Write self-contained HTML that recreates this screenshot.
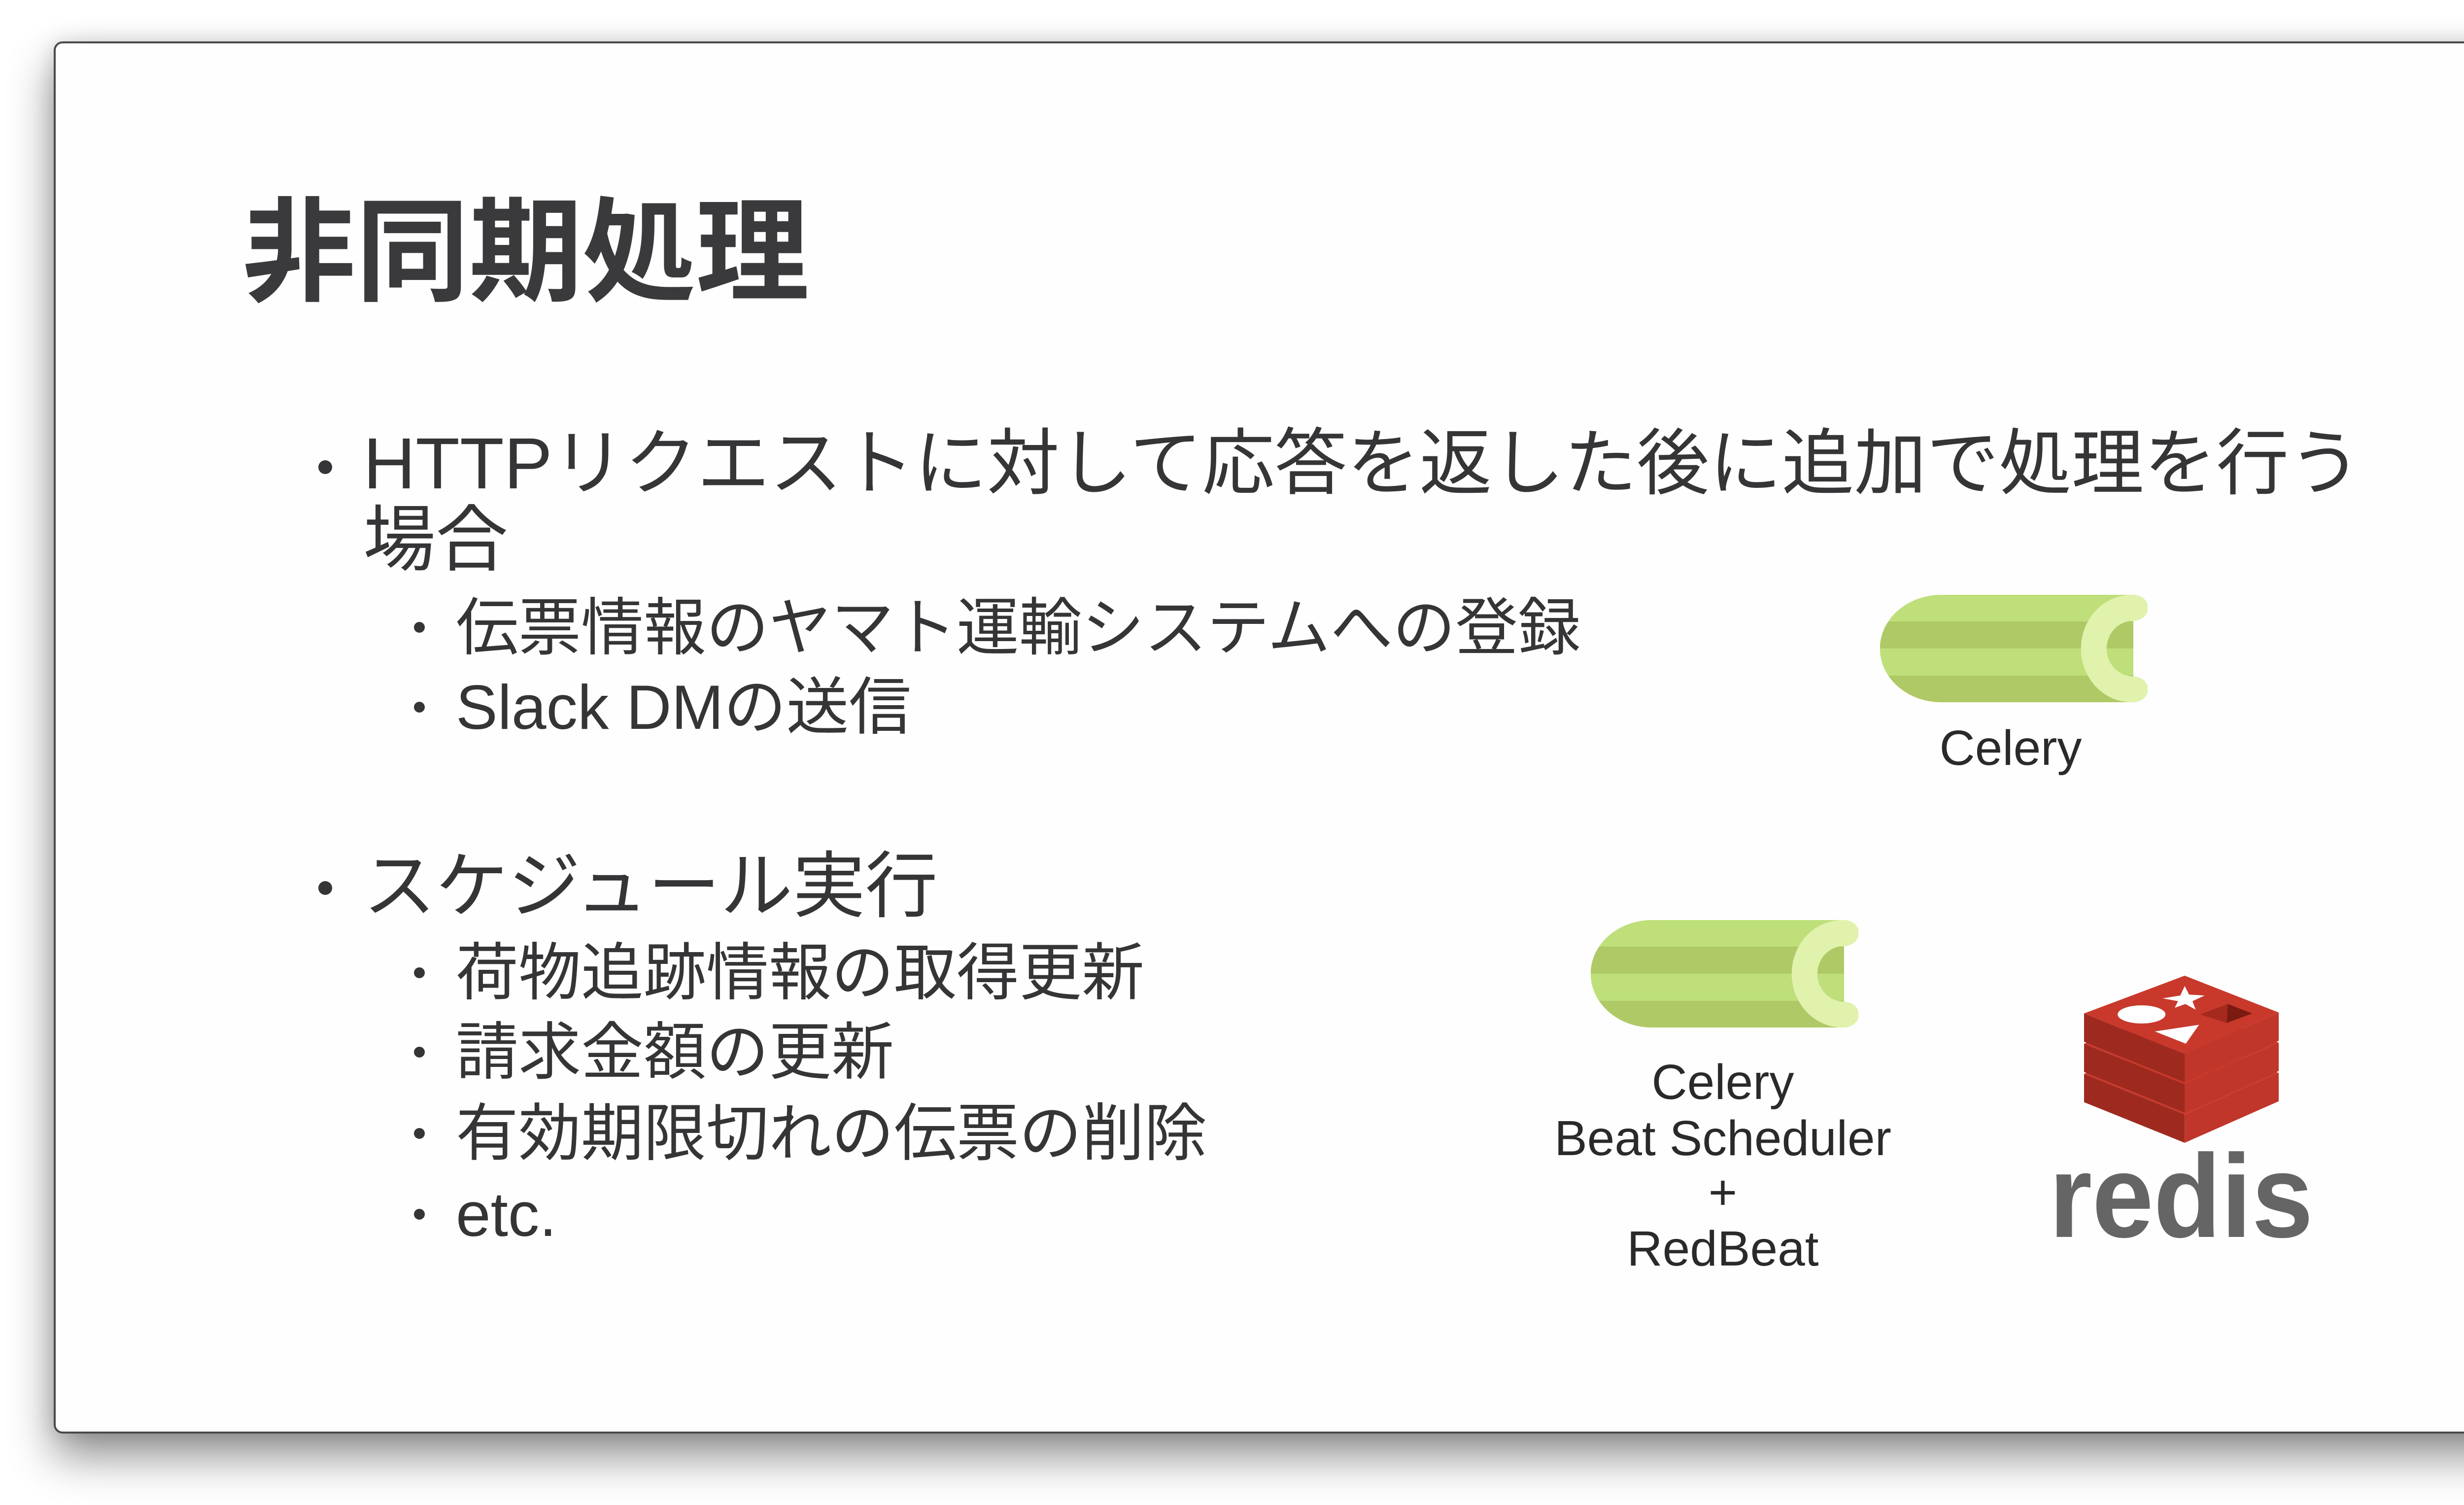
<!DOCTYPE html>
<html><head><meta charset="utf-8"><style>
html,body{margin:0;padding:0;width:5256px;height:3054px;background:#fff;overflow:hidden}
.win{position:absolute;left:109px;top:84px;width:5030px;height:2817px;border:4px solid #4a4a4a;border-radius:18px;background:#fefefe;box-shadow:0 45px 90px rgba(0,0,0,0.45),0 0 40px rgba(0,0,0,0.12)}
.t{position:absolute;white-space:nowrap;line-height:1;color:#353537;font-family:"Liberation Sans","Noto Sans CJK JP",sans-serif}
.d1,.d2{position:absolute;border-radius:50%;background:#353537}
.d1{width:28px;height:28px}
.d2{width:22px;height:22px}
.lab{position:absolute;white-space:nowrap;line-height:1;color:#2a2a2a;font-family:"Liberation Sans",sans-serif;font-size:100px;text-align:center;width:1000px}
</style></head><body>
<div class="win"></div>

<div class="t" style="left:492px;top:398px;font-size:230px;font-weight:bold;color:#3a3a3c">非同期処理</div>

<div class="d1" style="left:646px;top:934px"></div>
<div class="t" style="left:737px;top:868px;font-size:147px">HTTPリクエストに対して応答を返した後に追加で処理を行う</div>
<div class="t" style="left:737px;top:1023px;font-size:147px">場合</div>

<div class="d2" style="left:840px;top:1262px"></div>
<div class="t" style="left:925px;top:1211px;font-size:127px">伝票情報のヤマト運輸システムへの登録</div>
<div class="d2" style="left:840px;top:1424px"></div>
<div class="t" style="left:925px;top:1372px;font-size:127px">Slack DMの送信</div>

<div class="d1" style="left:646px;top:1788px"></div>
<div class="t" style="left:737px;top:1726px;font-size:147px">スケジュール実行</div>

<div class="d2" style="left:840px;top:1963px"></div>
<div class="t" style="left:925px;top:1911px;font-size:127px">荷物追跡情報の取得更新</div>
<div class="d2" style="left:840px;top:2124px"></div>
<div class="t" style="left:925px;top:2072px;font-size:127px">請求金額の更新</div>
<div class="d2" style="left:840px;top:2289px"></div>
<div class="t" style="left:925px;top:2237px;font-size:127px">有効期限切れの伝票の削除</div>
<div class="d2" style="left:840px;top:2453px"></div>
<div class="t" style="left:925px;top:2401px;font-size:127px">etc.</div>

<!-- Celery logo 1 -->
<svg style="position:absolute;left:3815px;top:1207px" width="543" height="218" viewBox="0 0 1405 645" preserveAspectRatio="none">
<defs><clipPath id="b1"><path d="M322,0 H1330 V645 H322 A322,322 0 0 1 322,0 Z"/></clipPath></defs>
<path d="M322,0 H1330 V645 H322 A322,322 0 0 1 322,0 Z" fill="#bedf79"/>
<g clip-path="url(#b1)" fill="#afc966"><rect x="0" y="160" width="1405" height="162"/><rect x="0" y="485" width="1405" height="160"/></g>
<path d="M1320,0 H1330 A78,78 0 0 1 1330,156 A140,167 0 0 0 1330,490 A77.5,77.5 0 0 1 1330,645 H1320 A265,322.5 0 0 1 1320,0 Z" fill="#e0f2ac"/>
</svg>
<div class="lab" style="left:3580px;top:1468px">Celery</div>

<!-- Celery logo 2 -->
<svg style="position:absolute;left:3228px;top:1867px" width="543" height="218" viewBox="0 0 1405 645" preserveAspectRatio="none">
<defs><clipPath id="b2"><path d="M322,0 H1330 V645 H322 A322,322 0 0 1 322,0 Z"/></clipPath></defs>
<path d="M322,0 H1330 V645 H322 A322,322 0 0 1 322,0 Z" fill="#bedf79"/>
<g clip-path="url(#b2)" fill="#afc966"><rect x="0" y="160" width="1405" height="162"/><rect x="0" y="485" width="1405" height="160"/></g>
<path d="M1320,0 H1330 A78,78 0 0 1 1330,156 A140,167 0 0 0 1330,490 A77.5,77.5 0 0 1 1330,645 H1320 A265,322.5 0 0 1 1320,0 Z" fill="#e0f2ac"/>
</svg>
<div class="lab" style="left:2996px;top:2146px">Celery</div>
<div class="lab" style="left:2996px;top:2260px">Beat Scheduler</div>
<div class="lab" style="left:2996px;top:2370px">+</div>
<div class="lab" style="left:2996px;top:2484px">RedBeat</div>

<!-- Redis -->
<svg style="position:absolute;left:4229px;top:1978px" width="395" height="341" viewBox="290 100 880 890" preserveAspectRatio="none">
<g>
<polygon points="290,625 745,840 745,990 290,775" fill="#9e2a1f"/>
<polygon points="745,840 1170,620 1170,770 745,990" fill="#c0362a"/>
<polygon points="745,425 1170,620 745,840 290,625" fill="#c8392c"/>
</g>
<g>
<polygon points="290,465 745,680 745,830 290,615" fill="#9e2a1f"/>
<polygon points="745,680 1170,460 1170,610 745,830" fill="#c0362a"/>
<polygon points="745,265 1170,460 745,680 290,465" fill="#c8392c"/>
</g>
<g>
<polygon points="290,305 745,520 745,670 290,455" fill="#9e2a1f"/>
<polygon points="745,520 1170,300 1170,450 745,670" fill="#c0362a"/>
<polygon points="745,105 1170,300 745,520 290,305" fill="#c8392c"/>
</g>
<ellipse cx="550" cy="310" rx="108" ry="48" fill="#fff"/>
<polygon points="745,160 765,205 835,210 780,240 795,285 748,255 700,275 715,240 645,225 725,210" fill="#fff"/>
<polygon points="610,400 810,365 750,465" fill="#fff"/>
<polygon points="815,310 940,255 1050,305 935,355" fill="#a5291d"/>
<polygon points="940,255 1050,305 935,355" fill="#7a1a10"/>
</svg>
<svg style="position:absolute;left:4150px;top:2280px" width="560" height="260">
<text x="8" y="230" textLength="536" lengthAdjust="spacingAndGlyphs" font-family="Liberation Sans, sans-serif" font-weight="bold" font-size="240" fill="#656565">redis</text>
</svg>
</body></html>
